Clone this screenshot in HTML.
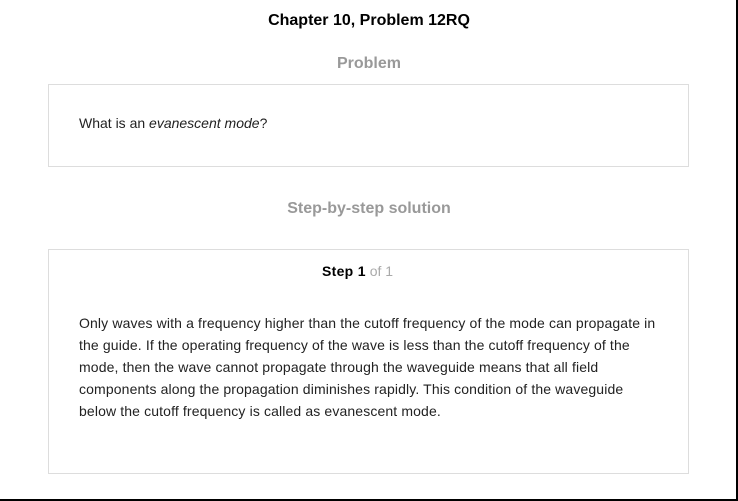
<!DOCTYPE html>
<html><head><style>
html,body{margin:0;padding:0;}
body{width:738px;height:501px;position:relative;background:#fff;font-family:"Liberation Sans",Arial,sans-serif;overflow:hidden;}
.edge-r{position:absolute;left:736px;top:0;width:2px;height:501px;background:#000;}
.edge-b{position:absolute;left:0;top:499px;width:738px;height:2px;background:#000;}
.t{position:absolute;left:0;width:738px;text-align:center;font-weight:bold;}
.box{position:absolute;left:48px;width:639px;border:1px solid #ddd;box-sizing:content-box;}
p{margin:0;}
</style></head><body>
<div class="t" style="top:12px;font-size:16px;color:#000;">Chapter 10, Problem 12RQ</div>
<div class="t" style="top:55px;font-size:16px;color:#999;">Problem</div>
<div class="box" style="top:84px;height:81px;">
<p style="position:absolute;left:30px;top:30px;font-size:14px;color:#222;white-space:nowrap;">What is an <i>evanescent mode</i>?</p>
</div>
<div class="t" style="top:200px;font-size:16px;color:#999;">Step-by-step solution</div>
<div class="box" style="top:249px;height:223px;">
<div style="position:absolute;left:273px;top:13px;font-size:14px;white-space:nowrap;"><b style="letter-spacing:0.3px">Step 1</b> <span style="color:#aaa">of 1</span></div>
<p style="position:absolute;left:30px;top:62px;font-size:14px;letter-spacing:0.13px;line-height:22px;color:#222;white-space:nowrap;">Only waves with a frequency higher than the cutoff frequency of the mode can propagate in<br>the guide. If the operating frequency of the wave is less than the cutoff frequency of the<br>mode, then the wave cannot propagate through the waveguide means that all field<br>components along the propagation diminishes rapidly. This condition of the waveguide<br>below the cutoff frequency is called as evanescent mode.</p>
</div>
<div class="edge-r"></div><div class="edge-b"></div>
</body></html>
